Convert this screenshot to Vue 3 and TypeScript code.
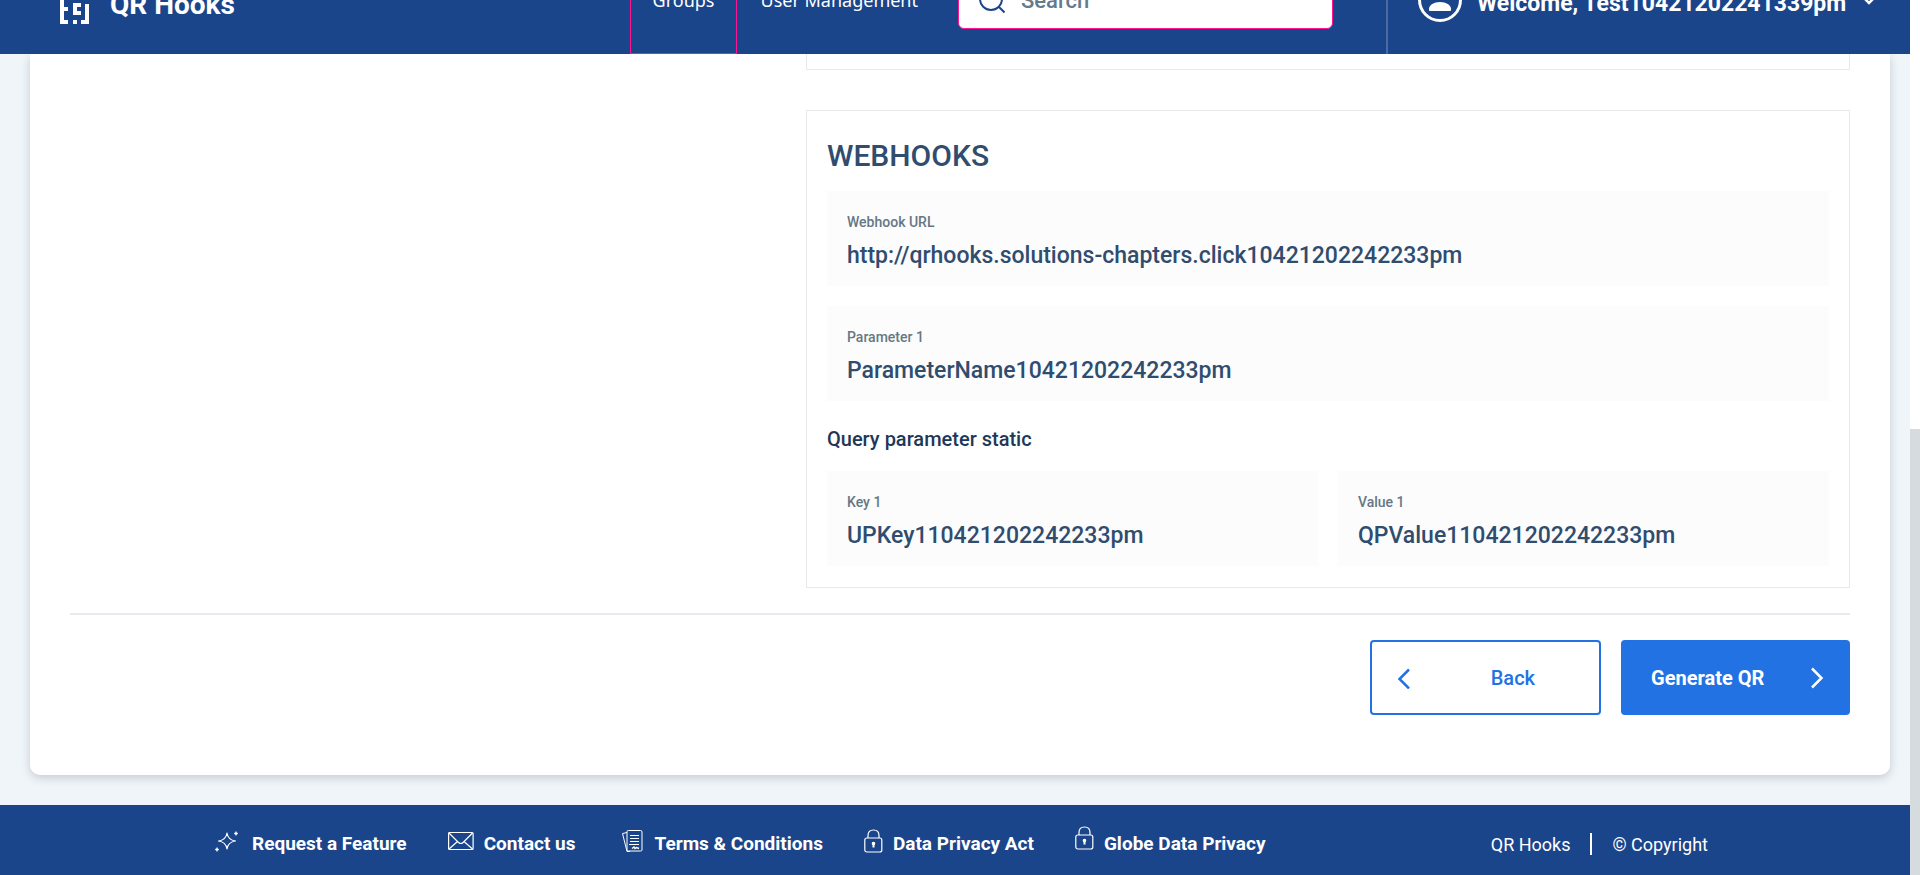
<script setup lang="ts">
import { ref } from 'vue'

interface Field {
  label: string
  value: string
}

const search = ref('')

const webhookFields: Field[] = [
  { label: 'Webhook URL', value: 'http://qrhooks.solutions-chapters.click10421202242233pm' },
  { label: 'Parameter 1', value: 'ParameterName10421202242233pm' },
]

const queryFields: Field[] = [
  { label: 'Key 1', value: 'UPKey110421202242233pm' },
  { label: 'Value 1', value: 'QPValue110421202242233pm' },
]
</script>

<template>
  <div class="shell">
    <div class="page">
      <header class="topbar">
        <a class="brand" href="#">
          <svg class="logo" width="30" height="48" viewBox="0 0 30 48" fill="#fff" aria-hidden="true">
            <path d="M0 0h8v4H4v27h4v4H4v9h4v4H0zM21 0h8v20h-4V4h-4zM25 28h4v20h-8v-4h4zM13 0h4v4h-4zM13 44h4v4h-4zM13 9h8v4h-4v4h4v4h-8zM13 27h8v4h-4v4h4v4h-8z" />
          </svg>
          <span class="brand-name">QR Hooks</span>
        </a>
        <nav class="nav">
          <a class="nav-link active" href="#">Groups</a>
          <a class="nav-link" href="#">User Management</a>
        </nav>
        <label class="search">
          <svg width="28" height="28" viewBox="0 0 28 28" fill="none" stroke="#1b458a" stroke-width="2" aria-hidden="true">
            <circle cx="14" cy="13" r="11" />
            <path d="M21.500 20.500l6 6" />
          </svg>
          <input v-model="search" type="search" placeholder="Search" aria-label="Search" />
        </label>
        <button class="user" type="button">
          <svg width="44" height="44" viewBox="0 0 44 44" aria-hidden="true">
            <circle cx="22" cy="22" r="20.5" fill="none" stroke="#fff" stroke-width="3" />
            <circle cx="22" cy="15" r="6" fill="#fff" />
            <path d="M11 32v-1c0-4 5-7 11-7s11 3 11 7v1q0 1-1 1H12q-1 0-1-1z" fill="#fff" />
          </svg>
          <span class="welcome">Welcome, Test10421202241339pm</span>
          <svg class="caret" width="12" height="10" viewBox="0 0 12 10" fill="none" stroke="#fff" stroke-width="2.5" aria-hidden="true">
            <path d="M1 3l5 5 5-5" />
          </svg>
        </button>
      </header>

      <main class="content">
        <section class="card">
          <div class="columns">
            <div class="details">
              <div class="panel previous"></div>
              <section class="panel">
                <h2>WEBHOOKS</h2>
                <dl class="stack">
                  <div v-for="f in webhookFields" :key="f.label" class="field">
                    <dt>{{ f.label }}</dt>
                    <dd>{{ f.value }}</dd>
                  </div>
                </dl>
                <h3>Query parameter static</h3>
                <dl class="pair">
                  <div v-for="f in queryFields" :key="f.label" class="field">
                    <dt>{{ f.label }}</dt>
                    <dd>{{ f.value }}</dd>
                  </div>
                </dl>
              </section>
            </div>
          </div>
          <div class="actions">
            <button class="btn back" type="button">
              <svg width="14" height="22" viewBox="0 0 14 22" fill="none" stroke="currentColor" stroke-width="2.5" aria-hidden="true">
                <path d="M12 2.500L2.500 12l9.500 9.500" />
              </svg>
              <span>Back</span>
            </button>
            <button class="btn generate" type="button">
              <span>Generate QR</span>
              <svg width="14" height="22" viewBox="0 0 14 22" fill="none" stroke="currentColor" stroke-width="2.5" aria-hidden="true">
                <path d="M2 1.500l9.500 9.500L2 20.500" />
              </svg>
            </button>
          </div>
        </section>
      </main>

      <footer class="footer">
        <nav class="links">
          <a href="#">
            <svg width="28" height="24" viewBox="0 0 28 24" fill="none" stroke="#fff" stroke-width="1.2" stroke-linejoin="round" aria-hidden="true">
              <path d="M13 4q1 7 8.500 8q-7.500 1-8.500 8q-1-7-8.500-8q7.500-1 8.500-8z" />
              <path d="M22 2.500l.7 1.300 1.300.7-1.300.7-.7 1.300-.7-1.300-1.300-.7 1.300-.7zM3 18.500l.7 1.300 1.300.7-1.300.7-.7 1.300-.7-1.300-1.300-.7 1.300-.7z" fill="#fff" stroke-width=".5" />
            </svg>
            <span>Request a Feature</span>
          </a>
          <a href="#">
            <svg width="26" height="20" viewBox="0 0 26 20" fill="none" stroke="#fff" stroke-width="1.2" aria-hidden="true">
              <rect x=".6" y="1.500" width="24.500" height="17" rx="1" />
              <path d="M1 2l9.500 9.500q2.300 2 4.600 0L24.500 2M1 18l8.500-7.500M24.500 18L16 10.500" />
            </svg>
            <span>Contact us</span>
          </a>
          <a href="#">
            <svg width="28" height="24" viewBox="0 0 28 24" fill="none" stroke="#fff" stroke-width="1" aria-hidden="true">
              <path d="M11.500 1.500h12q1.500 0 1.500 1.500v18q0 1-1.500 1h-12q-1.500 0-1.500-1V2.500q0-1 1.500-1zM10 3.500l-4.500 1 4.500 18h3" />
              <path d="M13 6.500h9M13 9.500h9M13 12.500h9M12 15.500h10" />
              <path d="M15 19.500l2-1.500 1 1.500 1.500-1 2.500 1" stroke-width="1.400" />
            </svg>
            <span>Terms &amp; Conditions</span>
          </a>
          <a href="#">
            <svg width="19" height="24" viewBox="0 0 19 24" fill="none" stroke="#fff" stroke-width="1.200" aria-hidden="true">
              <rect x=".8" y="9" width="17" height="14" rx="2" />
              <path d="M4 9V6.500q0-5.500 5.500-5.500t5.500 5.500V9" />
              <path d="M9.500 13.500v5" stroke-width="2" />
              <circle cx="9.500" cy="14.500" r="1.200" fill="#fff" />
            </svg>
            <span>Data Privacy Act</span>
          </a>
          <a href="#">
            <svg class="raised" width="19" height="24" viewBox="0 0 19 24" fill="none" stroke="#fff" stroke-width="1.200" aria-hidden="true">
              <rect x=".8" y="9" width="17" height="14" rx="2" />
              <path d="M4 9V6.500q0-5.500 5.500-5.500t5.500 5.500V9" />
              <path d="M9.500 13.500v5" stroke-width="2" />
              <circle cx="9.500" cy="14.500" r="1.200" fill="#fff" />
            </svg>
            <span>Globe Data Privacy</span>
          </a>
        </nav>
        <div class="legal">
          <span>QR Hooks</span>
          <i class="bar"></i>
          <span>© Copyright</span>
        </div>
      </footer>
    </div>
    <div class="scroll-track" aria-hidden="true"><div class="scroll-thumb"></div></div>
  </div>
</template>

<style>
body {
  margin: 0;
}
</style>

<style scoped>
.shell {
  display: flex;
  min-height: 100vh;
  overflow: hidden;
  font-family: Roboto, 'Liberation Sans', sans-serif;
  font-weight: 500;
}

.page {
  flex: 1;
  min-width: 0;
  display: flex;
  flex-direction: column;
  background: #f0f5fa;
}

.scroll-track {
  width: 10px;
  display: flex;
  flex-direction: column;
  justify-content: flex-end;
  background: #fff;
}

.scroll-thumb {
  height: 51%;
  background: #d6dbdf;
}

.topbar {
  position: relative;
  box-sizing: border-box;
  height: 108px;
  margin-top: -54px;
  padding-left: 60px;
  display: flex;
  align-items: center;
  background: #1b458a;
  color: #fff;
}

.brand {
  flex: 1;
  display: flex;
  align-items: center;
  gap: 20px;
  color: inherit;
  text-decoration: none;
}

.brand-name {
  padding-top: 10px;
  font-size: 28px;
  font-weight: 700;
  line-height: 32px;
}

.nav {
  display: flex;
  align-self: stretch;
  margin-right: 17px;
}

.nav-link {
  display: flex;
  align-items: center;
  padding: 0 22px;
  border: 1px solid transparent;
  color: inherit;
  font-family: 'Noto Sans', sans-serif;
  font-size: 18px;
  font-weight: 400;
  text-decoration: none;
}

.nav-link.active {
  border-color: #ff1493;
}

.search {
  box-sizing: border-box;
  width: 375px;
  height: 58px;
  margin-right: 53px;
  padding: 0 18px;
  display: flex;
  align-items: center;
  gap: 16px;
  border: 1px solid #ff1493;
  border-radius: 6px;
  background: #fff;
}

.search input {
  flex: 1;
  min-width: 0;
  padding: 0;
  border: 0;
  outline: 0;
  background: none;
  color: #304c6e;
  font: 500 22px Roboto, sans-serif;
}

.search input::placeholder {
  color: #667a8c;
  opacity: 1;
}

.user {
  box-sizing: border-box;
  width: 524px;
  align-self: stretch;
  padding: 0 35px 0 30px;
  display: flex;
  align-items: center;
  border: 0;
  border-left: 2px solid #4a6aa3;
  background: none;
  color: inherit;
  font-family: inherit;
}

.welcome {
  flex: 1;
  padding: 6px 0 0 15px;
  font-size: 23px;
  font-weight: 700;
  text-align: left;
}

.content {
  flex: 1;
  padding: 0 20px 30px 30px;
}

.card {
  padding: 0 40px 60px;
  border-radius: 0 0 10px 10px;
  background: #fff;
  box-shadow: 0 3px 10px rgba(30, 40, 60, 0.2);
}

.columns {
  display: grid;
  grid-template-columns: 2fr 3fr;
  column-gap: 40px;
  padding-bottom: 25px;
  border-bottom: 2px solid #e9e9ef;
}

.details {
  grid-column: 2;
  min-width: 0;
}

.panel {
  padding: 27px 20px 21px;
  border: 1px solid #e8e9eb;
}

.panel.previous {
  height: 15px;
  margin-bottom: 40px;
  padding: 0;
  border-top: 0;
}

h2 {
  margin: 0 0 17px;
  color: #304c6e;
  font-size: 30px;
  font-weight: 500;
  line-height: 36px;
}

h3 {
  margin: 26px 0 20px;
  color: #1d3858;
  font-size: 20px;
  font-weight: 500;
  line-height: 24px;
}

dl {
  display: grid;
  gap: 20px;
  margin: 0;
}

.pair {
  grid-template-columns: 1fr 1fr;
}

.field {
  padding: 21px 20px 16px;
  background: #fcfcfc;
}

dt {
  margin-bottom: 10px;
  color: #667784;
  font-size: 14px;
  line-height: 20px;
}

dd {
  margin: 0;
  color: #304c6e;
  font-size: 23px;
  line-height: 28px;
}

.actions {
  display: flex;
  justify-content: flex-end;
  gap: 20px;
  padding-top: 25px;
}

.btn {
  box-sizing: border-box;
  height: 75px;
  display: flex;
  align-items: center;
  border: 2px solid #2272e4;
  border-radius: 4px;
  font-family: inherit;
  font-size: 20px;
}

.back {
  width: 231px;
  padding: 0 64px 0 25px;
  justify-content: space-between;
  background: #fff;
  color: #2272e4;
  font-weight: 500;
}

.generate {
  width: 229px;
  padding: 0 24px 0 28px;
  justify-content: space-between;
  background: #2272e4;
  color: #fff;
  font-weight: 700;
}

.footer {
  box-sizing: border-box;
  min-height: 70px;
  padding: 2px 202px 0 214px;
  display: flex;
  align-items: center;
  justify-content: space-between;
  background: #1b458a;
  color: #fff;
}

.links {
  display: flex;
  align-items: center;
  gap: 41px;
}

.links a {
  display: flex;
  align-items: center;
  gap: 10px;
  color: inherit;
  text-decoration: none;
}

.links span {
  padding-top: 6px;
  font-size: 19px;
  font-weight: 700;
  line-height: 24px;
}

.raised {
  margin-bottom: 6px;
}

.legal {
  display: flex;
  align-items: center;
  gap: 20px;
  padding-top: 6px;
  font-size: 18px;
  font-weight: 400;
}

.bar {
  width: 2px;
  height: 22px;
  background: #fff;
}
</style>
